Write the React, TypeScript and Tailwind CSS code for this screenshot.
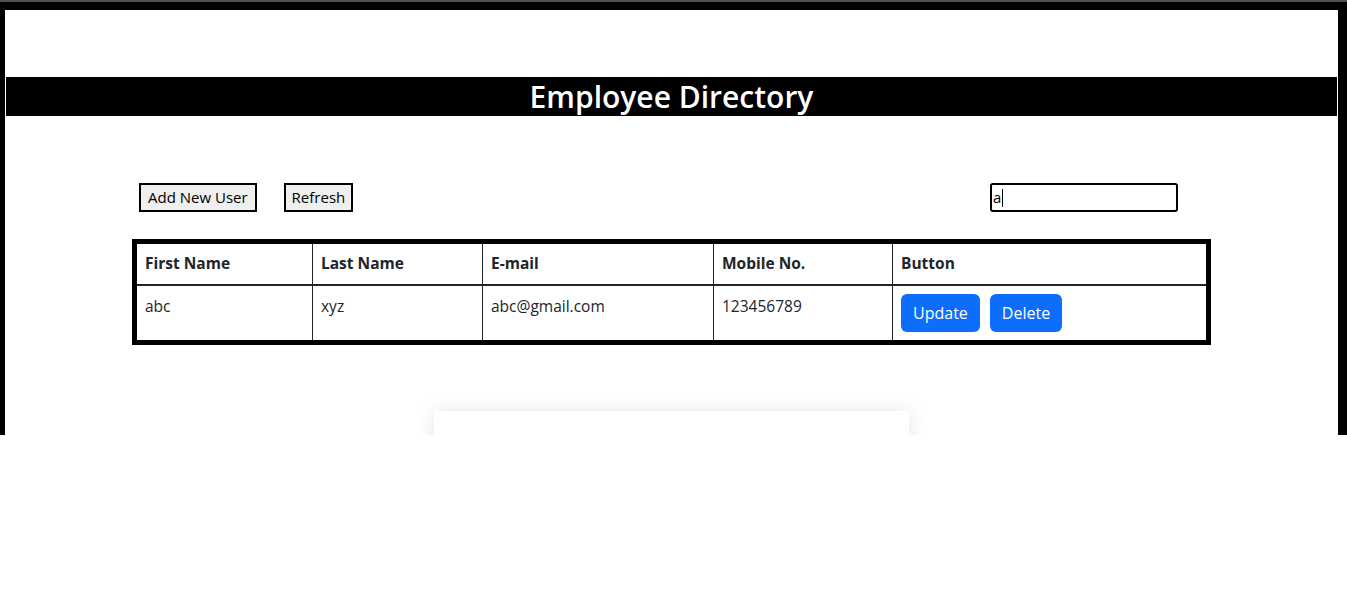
import { useState } from "react";

interface Employee {
  firstName: string;
  lastName: string;
  email: string;
  mobile: string;
}

const employees: Employee[] = [
  { firstName: "abc", lastName: "xyz", email: "abc@gmail.com", mobile: "123456789" },
];

const columns = [
  { label: "First Name", w: "w-[176px]" },
  { label: "Last Name", w: "w-[170px]" },
  { label: "E-mail", w: "w-[231px]" },
  { label: "Mobile No.", w: "w-[179px]" },
  { label: "Button", w: "w-[313px]" },
];

export default function App() {
  const [search, setSearch] = useState("a");

  return (
    <div className="h-[594px] w-full bg-white font-['Open_Sans',sans-serif] text-[#212529]">
      <div className="h-[435px] border-t-2 border-[#505050] bg-black pt-[8px] pl-[5px] pr-[9px]">
        <div className="h-full overflow-hidden bg-white">
          <h1 className="mx-px mt-[67px] h-[39px] bg-black text-center text-[30px] font-semibold leading-[39px] text-white">
            Employee Directory
          </h1>

          <div className="mx-auto mt-[67px] w-[1079px]">
            <div className="flex items-center pl-[7px] pr-[33px]">
              <button className="h-[29px] border-2 border-black bg-[#efefef] px-[7px] text-[15px] leading-none text-black">
                Add New User
              </button>
              <button className="ml-[27px] h-[29px] border-2 border-black bg-[#efefef] px-[6px] text-[15px] leading-none text-black">
                Refresh
              </button>
              <div className="ml-auto flex h-[29px] w-[188px] items-center rounded-[3px] border-2 border-black px-px">
                <input
                  value={search}
                  onChange={(e) => setSearch(e.target.value)}
                  size={1}
                  className="w-[9px] text-[15px] text-black outline-none"
                />
                <span className="h-[18px] w-px bg-black" />
              </div>
            </div>

            <table className="mt-[27px] w-[1079px] table-fixed border-separate border-spacing-0 border-[5px] border-black text-[15.5px]">
              <thead>
                <tr>
                  {columns.map((c, i) => (
                    <th
                      key={c.label}
                      className={`${c.w} h-[42px] border-b-2 border-[#212529] px-2 text-left align-middle font-bold ${
                        i < columns.length - 1 ? "border-r" : ""
                      }`}
                    >
                      {c.label}
                    </th>
                  ))}
                </tr>
              </thead>
              <tbody>
                {employees.map((e) => (
                  <tr key={e.email}>
                    <td className="border-r border-[#212529] px-2 py-2 align-top leading-6">{e.firstName}</td>
                    <td className="border-r border-[#212529] px-2 py-2 align-top leading-6">{e.lastName}</td>
                    <td className="border-r border-[#212529] px-2 py-2 align-top leading-6">{e.email}</td>
                    <td className="border-r border-[#212529] px-2 py-2 align-top leading-6">{e.mobile}</td>
                    <td className="px-2 py-2 align-top">
                      <div className="flex gap-[10px]">
                        <button className="h-[38px] rounded-[6px] bg-[#0d6efd] px-3 text-[16px] text-white">
                          Update
                        </button>
                        <button className="h-[38px] rounded-[6px] bg-[#0d6efd] px-3 text-[16px] text-white">
                          Delete
                        </button>
                      </div>
                    </td>
                  </tr>
                ))}
              </tbody>
            </table>
          </div>

          <div className="mx-auto mt-[66px] h-[300px] w-[475px] bg-white shadow-[0_0_18px_rgba(0,0,0,0.1)]" />
        </div>
      </div>
    </div>
  );
}
